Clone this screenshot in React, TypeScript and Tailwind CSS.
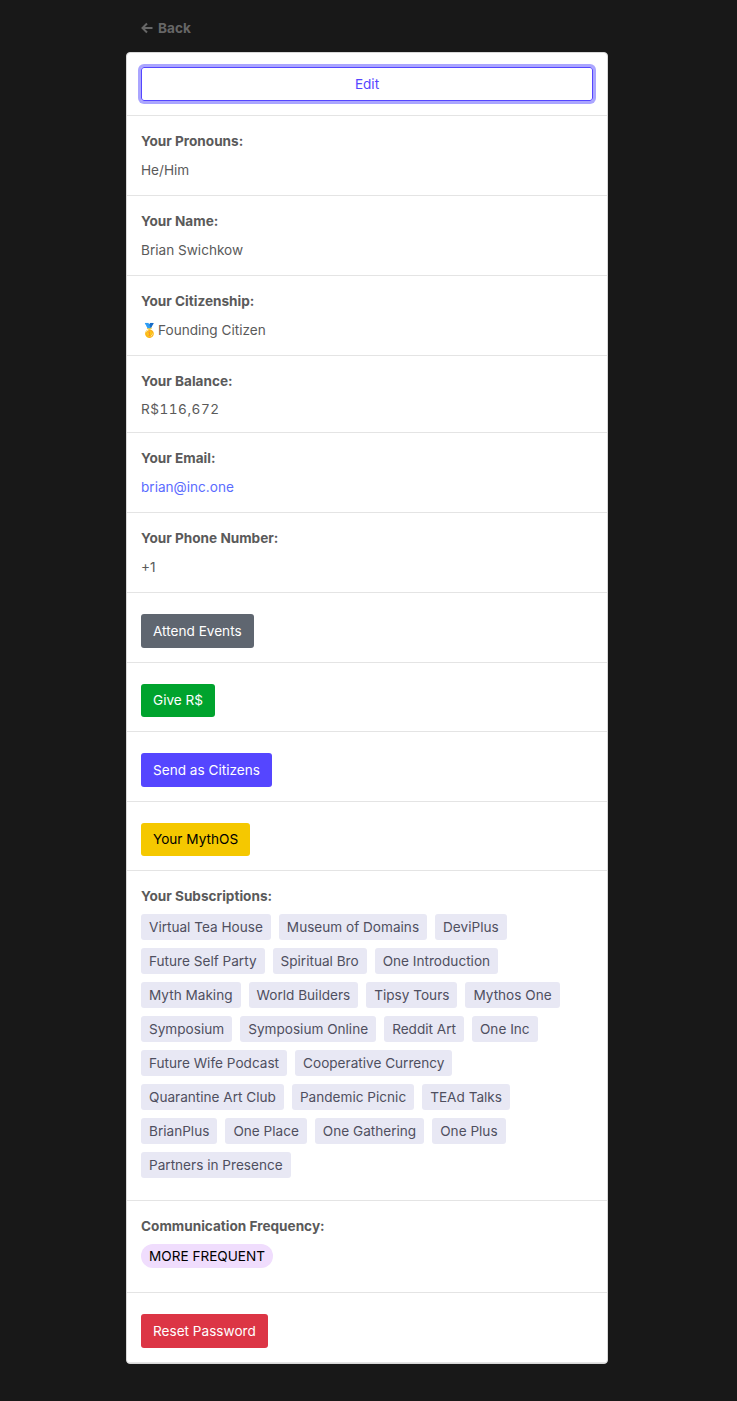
const subs = [
  'Virtual Tea House', 'Museum of Domains', 'DeviPlus', 'Future Self Party', 'Spiritual Bro', 'One Introduction',
  'Myth Making', 'World Builders', 'Tipsy Tours', 'Mythos One', 'Symposium', 'Symposium Online', 'Reddit Art', 'One Inc',
  'Future Wife Podcast', 'Cooperative Currency', 'Quarantine Art Club', 'Pandemic Picnic', 'TEAd Talks',
  'BrianPlus', 'One Place', 'One Gathering', 'One Plus', 'Partners in Presence',
]

function Field({ label, children }: { label: string; children: React.ReactNode }) {
  return (
    <div className="px-[14px] pt-[13px] pb-[13px] border-b border-[#e4e4e4]">
      <div className="font-bold text-[13.6px] leading-[24px] mb-[5px] text-[#5a5a5a]">{label}</div>
      <div className="text-[13.6px] leading-[24px] text-[#5a5a5a]">{children}</div>
    </div>
  )
}

function ActionRow({ label, color }: { label: string; color: string }) {
  return (
    <div className="px-[14px] pt-[21px] border-b border-[#e4e4e4] h-[69.5px]">
      <button className={`h-[33.5px] px-[12px] rounded-[3px] text-[13.6px] ${color}`}>{label}</button>
    </div>
  )
}

export default function App() {
  return (
    <div className="min-h-[1401px] bg-[#181818] font-['Inter',sans-serif] pl-[126px]">
      <div className="w-[482px]">
        <div className="h-[52px] pl-[15px] flex items-center gap-[5px] text-[13.6px] font-bold text-[#666666] pt-[4px]">
          <svg width="12" height="12" viewBox="0 0 12 12" fill="none" stroke="#666666" strokeWidth="2">
            <path d="M11.5 6H1.5M6 1.5L1.5 6L6 10.5" />
          </svg>
          Back
        </div>
        <div className="bg-white rounded-[4px] border border-[#d8d8d8] overflow-hidden">
          <div className="px-[14px] h-[63px] flex items-center border-b border-[#e4e4e4]">
            <button className="w-full h-[34px] rounded-[3px] border border-[#5546ff] text-[#5546ff] text-[13.6px] shadow-[0_0_0_3px_#aaa5ff]">Edit</button>
          </div>
          <Field label="Your Pronouns:">He/Him</Field>
          <Field label="Your Name:">Brian Swichkow</Field>
          <Field label="Your Citizenship:">🥇Founding Citizen</Field>
          <div className="px-[14px] pt-[13px] pb-[11px] border-b border-[#e4e4e4]">
            <div className="font-bold text-[13.6px] leading-[24px] mb-[4px] text-[#5a5a5a]">Your Balance:</div>
            <div className="text-[13.6px] leading-[24px] text-[#5a5a5a] tabular-nums tracking-[0.5px]">R$116,672</div>
          </div>
          <Field label="Your Email:"><span className="text-[#5b6cff]">brian@inc.one</span></Field>
          <Field label="Your Phone Number:">+1</Field>
          <ActionRow label="Attend Events" color="bg-[#5f6670] text-white" />
          <ActionRow label="Give R$" color="bg-[#00a32e] text-white" />
          <ActionRow label="Send as Citizens" color="bg-[#5546ff] text-white" />
          <ActionRow label="Your MythOS" color="bg-[#f5c800] text-black" />
          <div className="px-[14px] pt-[13px] pb-[22px] border-b border-[#e4e4e4]">
            <div className="font-bold text-[13.6px] leading-[24px] text-[#5a5a5a]">Your Subscriptions:</div>
            <div className="flex flex-wrap gap-[8px] mt-[6px]">
              {subs.map((s) => (
                <span key={s} className="h-[26px] px-[8px] flex items-center rounded-[3px] bg-[#e8e8f4] text-[13.6px] text-[#4f4f5f]">{s}</span>
              ))}
            </div>
          </div>
          <div className="px-[14px] pt-[13px] pb-[24px] border-b border-[#e4e4e4]">
            <div className="font-bold text-[13.6px] leading-[24px] text-[#5a5a5a]">Communication Frequency:</div>
            <div className="flex mt-[6px]">
              <span className="flex items-center h-[24px] px-[8px] rounded-full bg-[#f0ddfd] text-[13.6px] text-black">MORE FREQUENT</span>
            </div>
          </div>
          <ActionRow label="Reset Password" color="bg-[#dc3545] text-white" />
        </div>
      </div>
    </div>
  )
}
